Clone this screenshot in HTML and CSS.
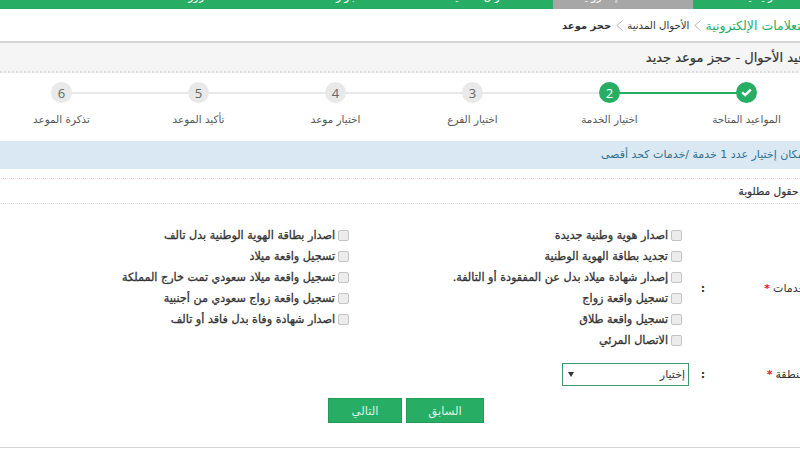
FILE: index.html
```html
<!DOCTYPE html>
<html lang="ar">
<head>
<meta charset="utf-8">
<title>حجز موعد</title>
<link rel="stylesheet" href="styles.css">
</head>
<body>
<div class="page" dir="rtl">
  <nav class="topnav">
    <a>الرئيسية</a><a class="active">الخدمات الإلكترونية</a><a>الأحوال المدنية</a><a>الجوازات</a><a>المرور</a><a>الخدمات</a>
  </nav>
  <div class="crumbs">
    <a class="crumb-link">الاستعلامات الإلكترونية</a><svg class="sep" width="7" height="11" viewBox="0 0 7 11"><path d="M6.5 .5 L.8 5.5 L6.5 10.5" fill="none" stroke="#b5b5b5"/></svg><span class="crumb-b">الأحوال المدنية</span><svg class="sep" width="7" height="11" viewBox="0 0 7 11"><path d="M6.5 .5 L.8 5.5 L6.5 10.5" fill="none" stroke="#b5b5b5"/></svg><strong class="crumb-c">حجز موعد</strong>
  </div>
  <h1 class="title">مواعيد الأحوال - حجز موعد جديد</h1>
  <ol class="steps">
    <li class="step done"><span class="dot"><svg width="11" height="9" viewBox="0 0 11 9"><path d="M1.2 4.4 L4.2 7.2 L9.8 1.6" fill="none" stroke="#fff" stroke-width="2.4"/></svg></span><span class="step-label">المواعيد المتاحة</span></li>
    <li class="step current"><span class="dot">2</span><span class="step-label">اختيار الخدمة</span></li>
    <li class="step"><span class="dot">3</span><span class="step-label">اختيار الفرع</span></li>
    <li class="step"><span class="dot">4</span><span class="step-label">اختيار موعد</span></li>
    <li class="step"><span class="dot">5</span><span class="step-label">تأكيد الموعد</span></li>
    <li class="step last"><span class="dot">6</span><span class="step-label">تذكرة الموعد</span></li>
  </ol>
  <div class="info">بإمكان إختيار عدد 1 خدمة /خدمات كحد أقصى</div>
  <div class="required">* حقول مطلوبة</div>
  <form class="form">
    <div class="row services">
      <div class="field-label">الخدمات<span class="star">*</span></div>
      <div class="colon">:</div>
      <div class="checks">
        <label class="check"><input type="checkbox">اصدار هوية وطنية جديدة</label>
        <label class="check"><input type="checkbox">اصدار بطاقة الهوية الوطنية بدل تالف</label>
        <label class="check"><input type="checkbox">تجديد بطاقة الهوية الوطنية</label>
        <label class="check"><input type="checkbox">تسجيل واقعة ميلاد</label>
        <label class="check"><input type="checkbox">إصدار شهادة ميلاد بدل عن المفقودة أو التالفة.</label>
        <label class="check"><input type="checkbox">تسجيل واقعة ميلاد سعودي تمت خارج المملكة</label>
        <label class="check"><input type="checkbox">تسجيل واقعة زواج</label>
        <label class="check"><input type="checkbox">تسجيل واقعة زواج سعودي من أجنبية</label>
        <label class="check"><input type="checkbox">تسجيل واقعة طلاق</label>
        <label class="check"><input type="checkbox">اصدار شهادة وفاة بدل فاقد أو تالف</label>
        <label class="check"><input type="checkbox">الاتصال المرئي</label>
      </div>
    </div>
    <div class="row region">
      <div class="field-label">المنطقة<span class="star">*</span></div>
      <div class="colon">:</div>
      <div class="select"><span>إختيار</span><i class="arrow"></i></div>
    </div>
    <div class="actions">
      <button type="button" class="btn prev">السابق</button>
      <button type="button" class="btn next">التالي</button>
    </div>
  </form>
  <div class="rule"></div>
</div>
</body>
</html>
```
FILE: styles.css
```css
html, body { margin: 0; padding: 0; height: 462px; overflow: hidden; background: #fff; }
body { font-family: "DejaVu Sans", sans-serif; color: #333; }
.page { width: 837px; height: 462px; margin-left: -7px; font-size: 11px; }

.topnav { height: 9px; display: flex; overflow: hidden; background: #27ae64; }
.topnav a { flex: 0 0 140px; height: 19px; margin-top: -10px; line-height: 13px; text-align: center; color: #fff; font-size: 11px; }
.topnav a.active { background: #a7a7a7; }
.topnav a:first-child { flex-basis: 137px; }

.crumbs { height: 34px; display: flex; align-items: center; gap: 4.5px; padding-right: 8px; font-size: 11px; border-bottom: 2px solid #d6d6d6; box-sizing: border-box; }
.crumb-link { color: #27ae64; font-size: 12.5px; }
.crumb-b { font-size: 10.2px; }
.crumb-c { font-size: 10px; }

.title { margin: 0; height: 30px; line-height: 29px; box-sizing: border-box; padding-right: 7px; font-size: 13px; font-weight: 400; -webkit-text-stroke: .2px #333; color: #333; background: #f5f5f5; border-bottom: 2px dotted #ddd; }

.steps { list-style: none; margin: 0; padding: 9px 15px 0 0; height: 68px; box-sizing: border-box; display: grid; grid-template-columns: repeat(6, 137px); justify-content: start; }
.step { position: relative; display: flex; flex-direction: column; align-items: center; gap: 9px; font-size: 10.4px; color: #555; }
.step::after { content: ""; position: absolute; top: 10px; right: 50%; width: 100%; height: 2px; background: #e8e8e8; }
.step.done::after { background: #27ae64; }
.step.last::after { display: none; }
.dot { position: relative; z-index: 1; width: 21px; height: 21px; border-radius: 50%; background: #e9e9e9; color: #666; font-family: "Open Sans", sans-serif; font-size: 13px; display: flex; align-items: center; justify-content: center; }
.done .dot, .current .dot { background: #27ae64; color: #fff; }
.step-label { line-height: 14px; }

.info { height: 28px; line-height: 28px; padding-right: 20px; background: #d9e8f3; color: #31708f; font-size: 11px; }
.required { margin-top: 9px; height: 26px; line-height: 25px; box-sizing: border-box; padding-right: 23px; font-size: 10.5px; -webkit-text-stroke: .2px #333; border-top: 1px dotted #f0cfd8; border-bottom: 1px dotted #ddd; color: #333; }

.row { display: grid; grid-template-columns: 106px 42px auto; }
.services { margin-top: 21px; }
.field-label { align-self: center; padding-right: 18px; color: #333; font-size: 11px; }
.star { color: #e0202a; font-weight: bold; margin-right: 3px; }
.colon { align-self: center; text-align: center; font-weight: bold; }
.checks { display: grid; grid-template-columns: 333px 333px; grid-auto-rows: 21px; }
.check { display: flex; align-items: center; gap: 3px; font-size: 11.2px; -webkit-text-stroke: .3px #333; color: #333; white-space: nowrap; }
.check input { appearance: none; margin: 0; width: 11px; height: 11px; border: 1px solid #c4c4c4; border-radius: 2px; background: #ececec; box-sizing: border-box; }

.region { margin-top: 12px; }
.select { position: relative; width: 127px; height: 23px; box-sizing: border-box; border: 1px solid #3d9a6c; display: flex; align-items: center; padding-right: 3px; font-size: 11px; margin-right: -7px; }
.arrow { position: absolute; left: 5px; top: 8px; border-top: 5px solid #333; border-left: 3px solid transparent; border-right: 3px solid transparent; }

.actions { display: flex; gap: 4px; margin: 12px 346px 0 0; }
.btn { font: inherit; font-size: 11.5px; height: 25px; color: #dff3e8; background: #27ae64; border: 1px solid #229a58; padding: 0; }
.prev { width: 78px; }
.next { width: 74px; }
.rule { margin-top: 24px; border-top: 1px solid #d6d6d6; }
```
